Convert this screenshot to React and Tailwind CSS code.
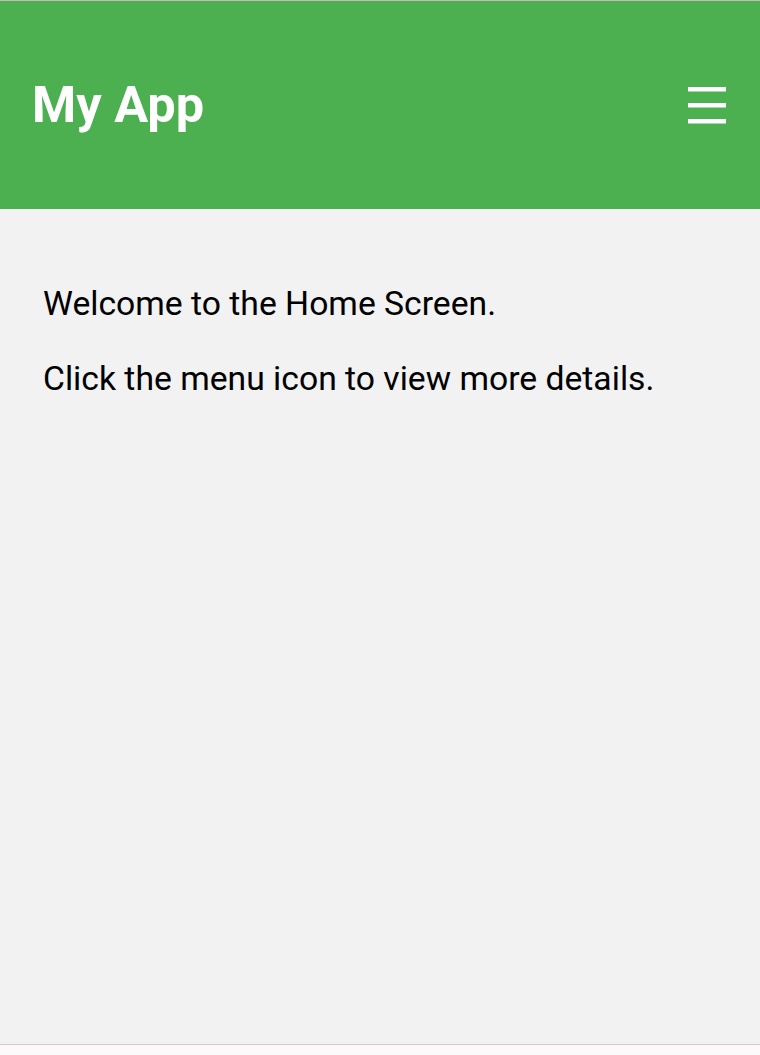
import React from 'react';

const MenuIcon = () => (
  <svg width="38" height="40" viewBox="0 0 38 40" className="block">
    <rect x="0" y="2" width="38" height="4.5" fill="#fff" />
    <rect x="0" y="18" width="38" height="4.5" fill="#fff" />
    <rect x="0" y="34" width="38" height="4.5" fill="#fff" />
  </svg>
);

export default function App() {
  return (
    <div className="h-[1055px] flex flex-col bg-[#fdf8fa] font-['Roboto',sans-serif]">
      <div className="h-[1045px] flex flex-col bg-[#f2f2f2] border-t border-[#c8b9b9] border-b border-b-[#dcc8c8]">
        <header className="h-[208px] bg-[#4caf50] flex items-center justify-between pl-[32px] pr-[34px]">
          <h1 className="text-white text-[50.5px] font-bold leading-none">My App</h1>
          <button className="cursor-pointer">
            <MenuIcon />
          </button>
        </header>
        <main className="px-[43px] pt-[73px] text-black text-[33.7px] leading-[44px]">
          <p className="mb-[31px]">Welcome to the Home Screen.</p>
          <p>Click the menu icon to view more details.</p>
        </main>
      </div>
    </div>
  );
}
